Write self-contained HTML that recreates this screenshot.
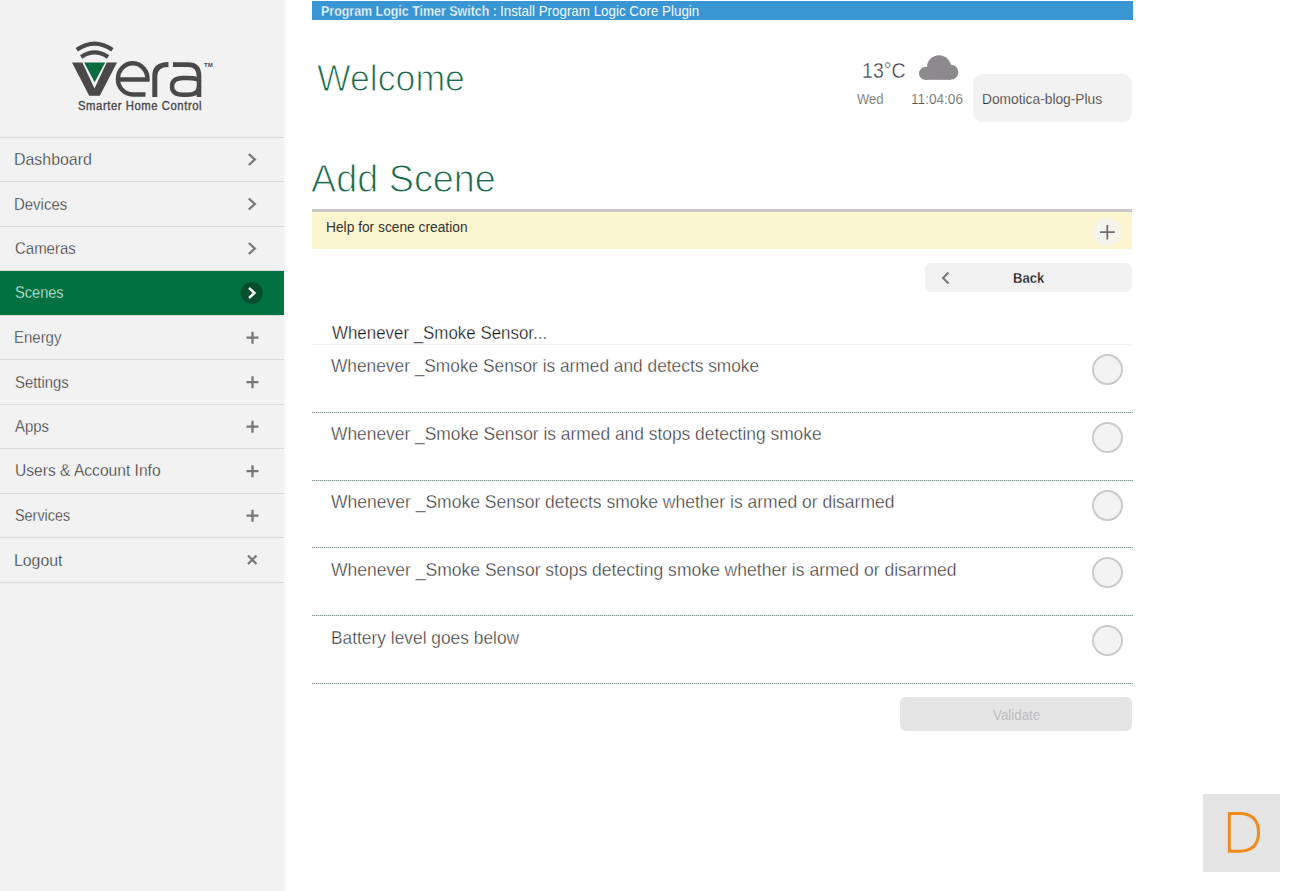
<!DOCTYPE html>
<html><head><meta charset="utf-8">
<style>
html,body{margin:0;padding:0;width:1300px;height:891px;overflow:hidden;background:#fff;}
body{position:relative;font-family:"Liberation Sans",sans-serif;}
.t{position:absolute;white-space:nowrap;line-height:1;transform-origin:0 0;}
#side{position:absolute;left:0;top:0;width:283px;height:891px;background:#f2f2f2;}
#sedge{position:absolute;left:283px;top:0;width:5px;height:891px;background:linear-gradient(90deg,#f4f4f4,#fbfbfb 50%,#fff);}
.mi{position:absolute;left:0;width:284px;height:44px;border-bottom:1px solid #dadada;}
.ml{position:absolute;left:0;width:284px;height:1px;background:#dadada;}
.hl{position:absolute;left:0;width:284px;height:1px;background:#f9f9f9;}
.mt{font-size:17px;color:#3c3c3c;left:14px;}
#bar{position:absolute;left:312px;top:1px;width:821px;height:19px;background:#3a95d3;}
.dl{position:absolute;left:312px;width:821px;height:1px;background:repeating-linear-gradient(90deg,#8d9d9b 0 1px,#c3d0ce 1px 2px);}
.radio{position:absolute;left:1092px;width:27px;height:27px;border:2px solid #cbcbcb;border-radius:50%;background:#f3f3f3;}
.row{font-size:17.5px;color:#555;left:332px;}
</style></head><body>
<div id="sedge"></div>
<div id="side">
  <svg style="position:absolute;left:0;top:0" width="284" height="130" viewBox="0 0 284 130">
    <!-- arcs -->
    <path d="M76.8 49.8 Q94.6 37.6 112.4 49.8" fill="none" stroke="#4a4848" stroke-width="4.2"/>
    <path d="M81.2 57 Q94.6 47.8 108 57" fill="none" stroke="#4a4848" stroke-width="4.2"/>
    <!-- V -->
    <path d="M72 62.6 L82.3 62.6 L94.5 88.5 L106.7 62.6 L117 62.6 L99.8 95.8 L89.2 95.8 Z" fill="#4a4848"/>
    <path d="M84.2 62.4 L105.2 62.4 L94.6 82.2 Z" fill="#0a6b41"/>
    <!-- e -->
    <path d="M145.5 94.5 L133 94.5 A14.8 15.6 0 1 1 147.5 79.5 L120 79.5" fill="none" stroke="#4a4848" stroke-width="4.4"/>
    <!-- r -->
    <path d="M154.8 97 L154.8 76 Q154.8 64.5 168.5 64.5" fill="none" stroke="#4a4848" stroke-width="5"/>
    <!-- a -->
    <path d="M173 64.6 L188 64.6 Q199 64.6 199 76 L199 97" fill="none" stroke="#4a4848" stroke-width="4.6"/>
    <path d="M199 81 Q199 78 187 78 L183 78 Q172 78 172 86.5 Q172 94.7 183 94.7 L187 94.7 Q199 94.7 199 86.5" fill="none" stroke="#4a4848" stroke-width="4.4"/>
    <text x="204" y="67" font-family="Liberation Sans" font-size="6" font-weight="bold" fill="#4a4848">TM</text>
  </svg>

  <div class="ml" style="top:137px"></div>
  <div class="ml" style="top:181px"></div>
  <div class="ml" style="top:226px"></div>
  <div class="ml" style="top:270px"></div>
  <div class="ml" style="top:315px"></div>
  <div class="ml" style="top:359px"></div>
  <div class="ml" style="top:404px"></div>
  <div class="ml" style="top:448px"></div>
  <div class="ml" style="top:493px"></div>
  <div class="ml" style="top:537px"></div>
  <div class="ml" style="top:582px"></div>
  <div style="position:absolute;left:0;top:271px;width:284px;height:44px;background:#017141;"></div>

  <svg style="position:absolute;left:0;top:0" width="284" height="600" viewBox="0 0 284 600">
    <g fill="none" stroke="#777" stroke-width="2.3">
      <path d="M248.8 154 L254.8 159.5 L248.8 165"/>
      <path d="M248.8 198.5 L254.8 204 L248.8 209.5"/>
      <path d="M248.8 243 L254.8 248.5 L248.8 254"/>
      <path d="M246.5 337.7 H258.5 M252.5 331.7 V343.7"/>
      <path d="M246.5 382.2 H258.5 M252.5 376.2 V388.2"/>
      <path d="M246.5 426.7 H258.5 M252.5 420.7 V432.7"/>
      <path d="M246.5 471.2 H258.5 M252.5 465.2 V477.2"/>
      <path d="M246.5 515.7 H258.5 M252.5 509.7 V521.7"/>
      <path d="M248 555.5 L256.5 564 M256.5 555.5 L248 564" stroke-width="2.2"/>
    </g>
    <circle cx="251.8" cy="293" r="11" fill="#064f2e"/>
    <path d="M249 288 L254.5 293 L249 298" fill="none" stroke="#fff" stroke-width="2.4"/>
  </svg>
</div>

<div id="bar"></div>
<svg style="position:absolute;left:915px;top:52px" width="48" height="32" viewBox="0 0 48 32">
  <g fill="#8c8a8c"><circle cx="24" cy="15.2" r="12"/><circle cx="10.5" cy="21.3" r="6.5"/><circle cx="36" cy="20.2" r="7.4"/><rect x="10.5" y="15" width="25.5" height="12.8"/></g>
</svg>

<div style="position:absolute;left:973px;top:74px;width:159px;height:48px;background:#f2f2f2;border-radius:9px;"></div>

<div style="position:absolute;left:312px;top:209px;width:820px;height:3px;background:#c9c9c5;"></div>
<div style="position:absolute;left:312px;top:212px;width:820px;height:37px;background:#fbf6d0;"></div>
<div style="position:absolute;left:1091px;top:216px;width:32px;height:32px;border-radius:50%;background:radial-gradient(circle,#f5f4ee 0,#f5f4ee 50%,#fbf6d0 72%);"></div>
<svg style="position:absolute;left:1090px;top:215px" width="34" height="34" viewBox="0 0 34 34">
  <path d="M10 17.2 H24.8 M17.3 10 V24.5" fill="none" stroke="#6e6e6e" stroke-width="1.8"/>
</svg>

<div style="position:absolute;left:925px;top:263px;width:207px;height:29px;background:#f2f2f2;border-radius:6px;"></div>
<svg style="position:absolute;left:925px;top:263px" width="40" height="29" viewBox="0 0 40 29">
  <path d="M23.5 9.5 L18 15 L23.5 20.5" fill="none" stroke="#777" stroke-width="2"/>
</svg>
<div style="position:absolute;left:312px;top:344px;width:821px;height:1px;background:#f2f2f2;"></div>

<div class="dl" style="top:412px"></div>
<div class="dl" style="top:480px"></div>
<div class="dl" style="top:547px"></div>
<div class="dl" style="top:615px"></div>
<div class="dl" style="top:683px"></div>

<div class="radio" style="top:354.1px"></div>
<div class="radio" style="top:421.9px"></div>
<div class="radio" style="top:489.6px"></div>
<div class="radio" style="top:557.4px"></div>
<div class="radio" style="top:625.1px"></div>

<div style="position:absolute;left:900px;top:697px;width:232px;height:34px;background:#e4e4e4;border-radius:6px;"></div>

<div style="position:absolute;left:1203px;top:794px;width:77px;height:78px;background:#e4e4e4;"></div>
<svg style="position:absolute;left:1203px;top:794px" width="77" height="78" viewBox="0 0 77 78">
  <path d="M26.3 19.5 L36 19.5 Q55.5 19.5 55.5 38.5 Q55.5 57.2 36 57.2 L26.3 57.2 Z" fill="none" stroke="#f08a1a" stroke-width="2.9"/>
</svg>
<div class="t" id="m0" style="left:13.93px;top:151px;font-size:17px;font-weight:400;color:#2c2c2c;transform:scaleX(0.9363);-webkit-text-stroke:0.35px #f2f2f2;">Dashboard</div>
<div class="t" id="m1" style="left:14.04px;top:196px;font-size:17px;font-weight:400;color:#2c2c2c;transform:scaleX(0.8793);-webkit-text-stroke:0.35px #f2f2f2;">Devices</div>
<div class="t" id="m2" style="left:14.92px;top:240px;font-size:17px;font-weight:400;color:#2c2c2c;transform:scaleX(0.8806);-webkit-text-stroke:0.35px #f2f2f2;">Cameras</div>
<div class="t" id="m3" style="left:14.94px;top:284px;font-size:17px;font-weight:400;color:#dff5e8;transform:scaleX(0.8582);-webkit-text-stroke:0.35px #017141;">Scenes</div>
<div class="t" id="m4" style="left:14.04px;top:329px;font-size:17px;font-weight:400;color:#2c2c2c;transform:scaleX(0.8804);-webkit-text-stroke:0.35px #f2f2f2;">Energy</div>
<div class="t" id="m5" style="left:14.93px;top:374px;font-size:17px;font-weight:400;color:#2c2c2c;transform:scaleX(0.8750);-webkit-text-stroke:0.35px #f2f2f2;">Settings</div>
<div class="t" id="m6" style="left:14.92px;top:418px;font-size:17px;font-weight:400;color:#2c2c2c;transform:scaleX(0.8784);-webkit-text-stroke:0.35px #f2f2f2;">Apps</div>
<div class="t" id="m7" style="left:14.88px;top:462px;font-size:17px;font-weight:400;color:#2c2c2c;transform:scaleX(0.9172);-webkit-text-stroke:0.35px #f2f2f2;">Users &amp; Account Info</div>
<div class="t" id="m8" style="left:14.95px;top:507px;font-size:17px;font-weight:400;color:#2c2c2c;transform:scaleX(0.8469);-webkit-text-stroke:0.35px #f2f2f2;">Services</div>
<div class="t" id="m9" style="left:13.94px;top:552px;font-size:17px;font-weight:400;color:#2c2c2c;transform:scaleX(0.9320);-webkit-text-stroke:0.35px #f2f2f2;">Logout</div>
<div class="t" id="slogan" style="left:78.36px;top:100px;font-size:12px;font-weight:400;color:#4a4848;transform:scaleX(0.9400);-webkit-text-stroke:0.35px #4a4848;letter-spacing:0.6px;">Smarter Home Control</div>
<div class="t" id="bar1" style="left:321.44px;top:4px;font-size:14.5px;font-weight:700;color:#f2fbff;transform:scaleX(0.8571);-webkit-text-stroke:0.3px #3a95d3;">Program Logic Timer Switch :</div>
<div class="t" id="bar2" style="left:500.48px;top:4px;font-size:14.5px;font-weight:400;color:#f2fbff;transform:scaleX(0.9224);">Install Program Logic Core Plugin</div>
<div class="t" id="welcome" style="left:317.14px;top:60px;font-size:37px;font-weight:400;color:#1d6a4c;transform:scaleX(0.9636);-webkit-text-stroke:1px #fff;">Welcome</div>
<div class="t" id="temp" style="left:862.18px;top:61px;font-size:21.5px;font-weight:400;color:#3b3a48;transform:scaleX(0.9111);-webkit-text-stroke:0.4px #fff;">13°C</div>
<div class="t" id="wed" style="left:857.00px;top:92px;font-size:14.5px;font-weight:400;color:#555555;transform:scaleX(0.8966);-webkit-text-stroke:0.25px #fff;">Wed</div>
<div class="t" id="time" style="left:910.96px;top:92px;font-size:14.5px;font-weight:400;color:#555555;transform:scaleX(0.9389);-webkit-text-stroke:0.25px #fff;">11:04:06</div>
<div class="t" id="dom" style="left:981.93px;top:92px;font-size:14.2px;font-weight:400;color:#262626;transform:scaleX(0.9705);-webkit-text-stroke:0.25px #f2f2f2;">Domotica-blog-Plus</div>
<div class="t" id="addscene" style="left:311.34px;top:159px;font-size:39.5px;font-weight:400;color:#1d6a4c;transform:scaleX(0.9563);-webkit-text-stroke:1px #fff;">Add Scene</div>
<div class="t" id="help" style="left:325.82px;top:220px;font-size:14px;font-weight:400;color:#333333;transform:scaleX(0.9831);">Help for scene creation</div>
<div class="t" id="back" style="left:1013.10px;top:271px;font-size:14.5px;font-weight:700;color:#151515;transform:scaleX(0.9030);-webkit-text-stroke:0.3px #f2f2f2;">Back</div>
<div class="t" id="hdr" style="left:332.00px;top:325px;font-size:17.6px;font-weight:400;color:#111111;transform:scaleX(0.9604);-webkit-text-stroke:0.3px #fff;">Whenever _Smoke Sensor...</div>
<div class="t" id="r0" style="left:331.03px;top:358px;font-size:17.8px;font-weight:400;color:#363636;transform:scaleX(0.9735);-webkit-text-stroke:0.35px #fff;">Whenever _Smoke Sensor is armed and detects smoke</div>
<div class="t" id="r1" style="left:331.02px;top:426px;font-size:17.8px;font-weight:400;color:#363636;transform:scaleX(0.9772);-webkit-text-stroke:0.35px #fff;">Whenever _Smoke Sensor is armed and stops detecting smoke</div>
<div class="t" id="r2" style="left:331.02px;top:494px;font-size:17.8px;font-weight:400;color:#363636;transform:scaleX(0.9847);-webkit-text-stroke:0.35px #fff;">Whenever _Smoke Sensor detects smoke whether is armed or disarmed</div>
<div class="t" id="r3" style="left:331.01px;top:562px;font-size:17.8px;font-weight:400;color:#363636;transform:scaleX(0.9858);-webkit-text-stroke:0.35px #fff;">Whenever _Smoke Sensor stops detecting smoke whether is armed or disarmed</div>
<div class="t" id="r4" style="left:331.05px;top:630px;font-size:17.8px;font-weight:400;color:#363636;transform:scaleX(0.9759);-webkit-text-stroke:0.35px #fff;">Battery level goes below</div>
<div class="t" id="validate" style="left:992.90px;top:707px;font-size:15px;font-weight:400;color:#bcbcbc;transform:scaleX(0.8887);">Validate</div>
</body></html>
